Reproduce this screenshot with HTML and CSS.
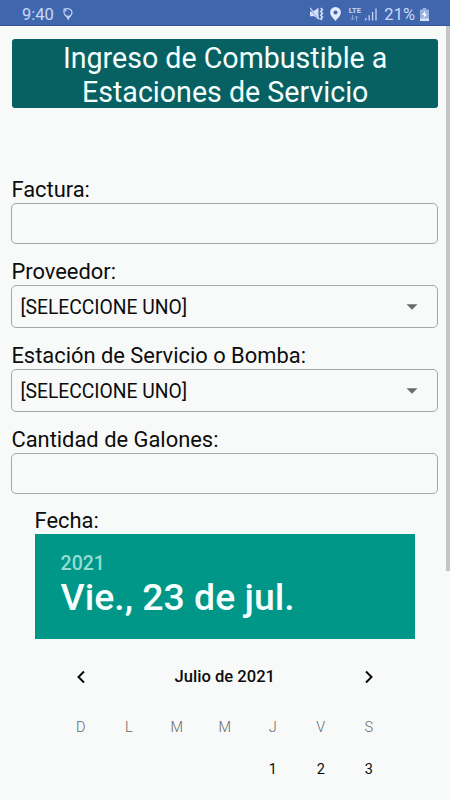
FILE: index.html
```
<!DOCTYPE html>
<html lang="es">
<head>
  <meta charset="UTF-8" />
  <meta name="viewport" content="width=device-width, initial-scale=1.0" />
  <title>Ingreso de Combustible</title>
  <link rel="stylesheet" href="styles.css">
</head>
<body>

  <header class="status-bar">
    <span class="clock">9:40</span>
    <svg class="icon-balloon" width="10" height="13" viewBox="0 0 10 13">
      <path d="M1 1.2C3 .2 8.600.2 9 4.200 9.200 7 7 8.600 5.200 9.800 3 8.400 1 6.600 1 4.200Z" fill="none" stroke="#c3d4f5" stroke-width="1.100"/>
      <path d="M1 1l3 1-2 2z" fill="#c3d4f5"/>
      <path d="M2.200 6.800C4 8.200 6.500 8.200 8.200 6.800L5.200 12.400Z" fill="#c3d4f5"/>
    </svg>
    <div class="status-icons">
      <svg class="icon-mute" width="14" height="14" viewBox="0 0 14 14">
        <path d="M0 4.500h3L8.500.8v12L4.500 9.200H0z" fill="#d3dff8"/>
        <path d="M0 2l9.500 11" stroke="#4067ad" stroke-width="1"/>
        <path d="M0 .8l9.500 11.500" stroke="#d3dff8" stroke-width="1.200"/>
        <path d="M10.700 1l1.800 1.800-1.800 1.800 1.800 1.800-1.800 1.800 1.800 1.800-1.800 1.800 1.500 1.200" fill="none" stroke="#d3dff8" stroke-width="1.500"/>
      </svg>
      <svg class="icon-pin" width="11" height="14" viewBox="0 0 10 13">
        <path fill-rule="evenodd" d="M5 0a5 5 0 0 1 5 5c0 3-3.200 5.500-5 8C3.200 10.500 0 8 0 5a5 5 0 0 1 5-5zm0 3.200a1.900 1.900 0 1 0 0 3.800 1.900 1.900 0 0 0 0-3.800z" fill="#e3ebfc"/>
      </svg>
      <div class="lte">
        <span>LTE</span>
        <svg width="9" height="6" viewBox="0 0 9 6">
          <path d="M2.500 0v5M.5 3l2 2 2-2M6.500 6V1M4.500 3l2-2 2 2" fill="none" stroke="#86a4da" stroke-width="1"/>
        </svg>
      </div>
      <svg class="icon-signal" width="12" height="13" viewBox="0 0 12 13">
        <path d="M.8 10v2.500M4.200 7.300v5.200M7.600 4v8.500M11 .5v12" stroke="#c3d4f5" stroke-width="1.300"/>
      </svg>
      <span class="percent">21%</span>
      <svg class="icon-battery" width="9" height="13" viewBox="0 0 9 13">
        <path d="M2.800 0h3.400v1.500H9V13H0V1.500h2.800z" fill="#98b2e2"/>
        <path d="M0 10.500h9V13H0z" fill="#d9e4fa"/>
        <path d="M5.300 2.500L2 7h2.200L3.500 10.300 7 5.800H4.800z" fill="#fff"/>
      </svg>
    </div>
  </header>

  <div class="scrollbar"></div>

  <main class="container">
    <h1 class="title">Ingreso de Combustible a Estaciones de Servicio</h1>

    <div class="field">
      <label for="factura">Factura:</label>
      <input class="box" id="factura" type="text">
    </div>

    <div class="field">
      <label>Proveedor:</label>
      <div class="box select">
        <span>[SELECCIONE UNO]</span>
        <svg width="12" height="6" viewBox="0 0 12 6"><path d="M.5.200h11L6 5.700z" fill="#6a6c6b"/></svg>
      </div>
    </div>

    <div class="field">
      <label>Estación de Servicio o Bomba:</label>
      <div class="box select">
        <span>[SELECCIONE UNO]</span>
        <svg width="12" height="6" viewBox="0 0 12 6"><path d="M.5.200h11L6 5.700z" fill="#6a6c6b"/></svg>
      </div>
    </div>

    <div class="field">
      <label for="galones">Cantidad de Galones:</label>
      <input class="box" id="galones" type="text">
    </div>

    <section class="date-picker">
      <label>Fecha:</label>
      <div class="date-header">
        <div class="year">2021</div>
        <div class="date">Vie., 23 de jul.</div>
      </div>
      <div class="month-row">
        <svg width="10" height="14" viewBox="0 0 10 14"><path d="M8 1.500L2.500 7 8 12.500" fill="none" stroke="#0a0a0a" stroke-width="2"/></svg>
        <span>Julio de 2021</span>
        <svg width="10" height="14" viewBox="0 0 10 14"><path d="M2 1.500L7.500 7 2 12.500" fill="none" stroke="#0a0a0a" stroke-width="2"/></svg>
      </div>
      <div class="days week">
        <span>D</span><span>L</span><span>M</span><span>M</span><span>J</span><span>V</span><span>S</span>
      </div>
      <div class="days">
        <span></span><span></span><span></span><span></span><span>1</span><span>2</span><span>3</span>
      </div>
    </section>
  </main>

</body>
</html>
```
FILE: styles.css
```
* {
  box-sizing: border-box;
}

body {
  margin: 0;
  height: 800px;
  overflow: hidden;
  background: #f8faf9;
  color: #0c0c0c;
  font-family: Roboto, sans-serif;
}

.status-bar {
  display: flex;
  align-items: center;
  height: 26px;
  padding: 3px 21px 0 22px;
  background: #4067ad;
  border-bottom: 1px solid #3159a0;
  color: #c9d8f7;
}

.clock {
  font-size: 16.5px;
  margin-right: 9px;
}

.status-icons {
  display: flex;
  align-items: center;
  margin-left: auto;
}

.icon-pin {
  margin-left: 6px;
}

.lte {
  display: flex;
  flex-direction: column;
  align-items: center;
  width: 13px;
  margin-left: 7px;
  font-size: 7.5px;
  font-weight: 700;
  line-height: 8px;
}

.icon-signal {
  margin-left: 4px;
}

.percent {
  margin-left: 7px;
  font-size: 16.5px;
}

.icon-battery {
  margin-left: 5px;
}

/* scroll thumb sits over the page edge */
.scrollbar {
  position: absolute;
  top: 26px;
  right: 0;
  width: 4px;
  height: 545px;
  background: #c4c5c5;
}

.container {
  padding: 13px 12px 0 11.4px;
}

.title {
  height: 69px;
  margin: 0 0 69px 1px;
  padding: 2px 40px 0;
  border-radius: 3px;
  background: #076163;
  color: #f4fffe;
  font-size: 28.6px;
  font-weight: 400;
  line-height: 34px;
  text-align: center;
}

.field {
  margin-bottom: 15px;
}

label {
  display: block;
  height: 26px;
  font-size: 21.9px;
  line-height: 26px;
}

.box {
  display: block;
  width: 100%;
  height: 40.5px;
  border: 1px solid #a5a7a6;
  border-radius: 5px;
  background: transparent;
}

.select {
  display: flex;
  align-items: center;
  justify-content: space-between;
  height: 43.3px;
  padding: 2px 19px 0 8px;
  font-size: 19.3px;
}

.date-picker {
  margin: -1px 23px 0 23.2px;
}

.date-header {
  height: 105px;
  padding: 18px 26px 0;
  background: #009788;
}

.year {
  color: #93dcd3;
  font-size: 19.5px;
  font-weight: 500;
  line-height: 24px;
}

.date {
  color: #f8ffff;
  font-size: 37.4px;
  font-weight: 500;
  line-height: 42px;
}

.month-row {
  display: flex;
  align-items: center;
  justify-content: space-between;
  height: 26px;
  margin-top: 25px;
  padding: 0 41px;
  font-size: 16.6px;
  font-weight: 500;
}

.days {
  display: grid;
  grid-template-columns: repeat(7, 48px);
  justify-content: center;
  height: 42px;
  line-height: 42px;
  font-size: 14.5px;
  text-align: center;
}

.week {
  margin-top: 17px;
  color: #666867;
  font-weight: 300;
}
```
